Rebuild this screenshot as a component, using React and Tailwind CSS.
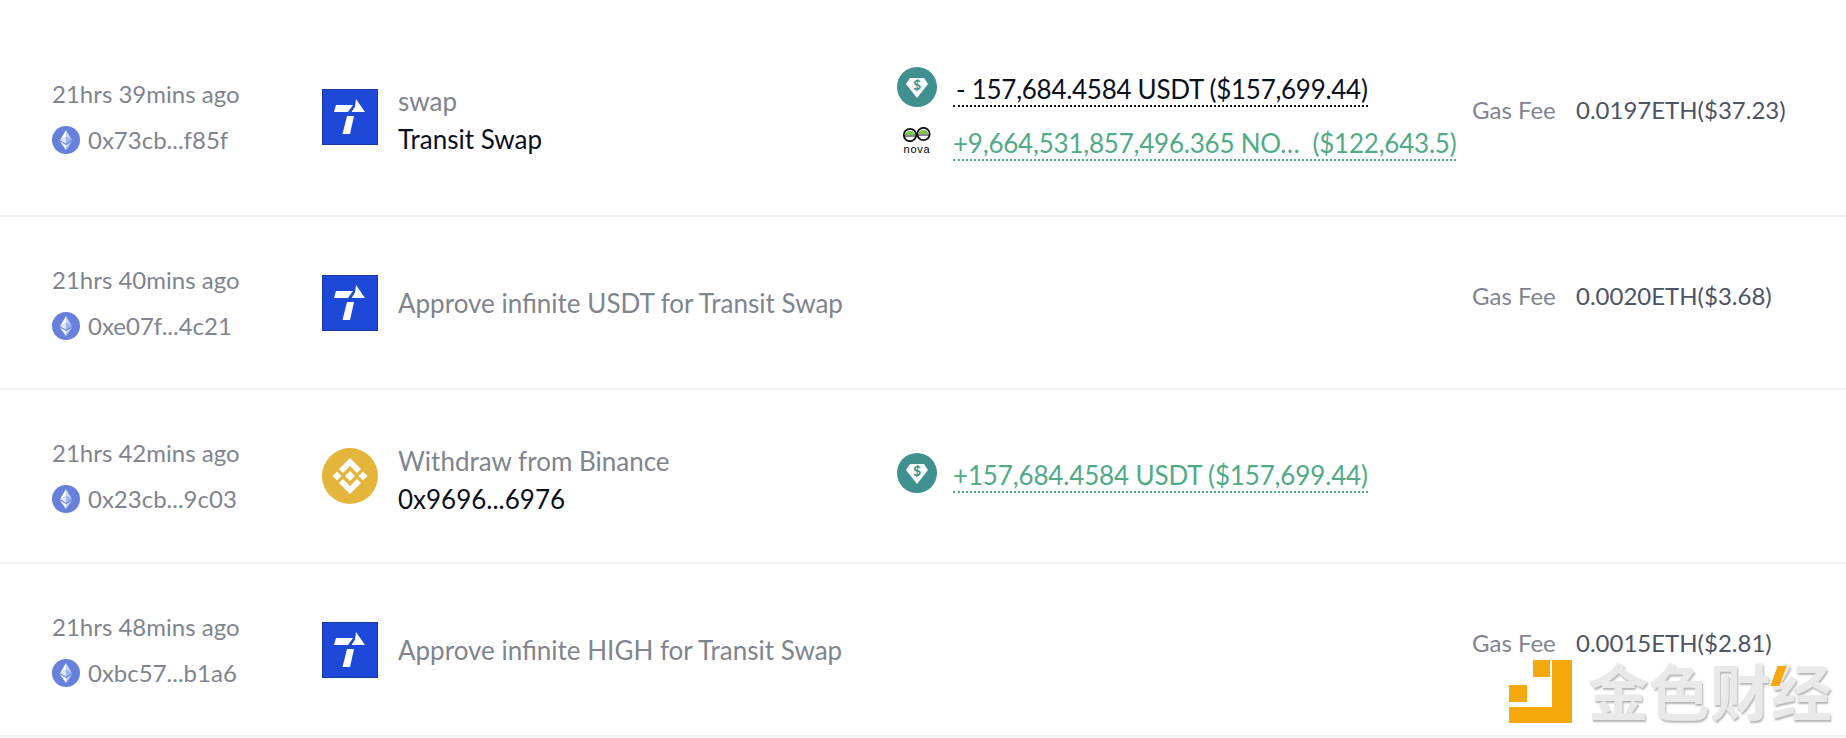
function TransitIcon() {
  return (
    <svg viewBox="0 0 56 56" className="w-14 h-14 shrink-0">
      <rect width="56" height="56" fill="#1d48d8" />
      <rect x="0.5" y="0.5" width="55" height="55" fill="none" stroke="#173a9e" />
      <path d="M14 16H31L26 23H12Z" fill="#fff" />
      <path d="M34 10L43 23H29.5L33 17.5Z" fill="#fff" />
      <path d="M25 27H32L28 45H20.5Z" fill="#fff" />
    </svg>
  );
}

function BinanceIcon() {
  return (
    <svg viewBox="0 0 56 56" className="w-14 h-14 shrink-0">
      <circle cx="28" cy="28" r="28" fill="#e3b53b" />
      <g fill="#fff">
        <path d="M28 10L39 21L35 25L28 18L21 25L17 21Z" />
        <path d="M28 46L39 35L35 31L28 38L21 31L17 35Z" />
        <path d="M15 23.5L19.5 28L15 32.5L10.5 28Z" />
        <path d="M41 23.5L45.5 28L41 32.5L36.5 28Z" />
        <path d="M28 23L33 28L28 33L23 28Z" />
      </g>
    </svg>
  );
}

function UsdtIcon() {
  return (
    <svg viewBox="0 0 40 40" className="w-10 h-10">
      <circle cx="20" cy="20" r="20" fill="#40908f" />
      <path d="M13 11H27L31 17L20 31L9 17Z" fill="#fff" />
      <text x="20" y="23" textAnchor="middle" fontSize="14" fontWeight="700" fill="#40908f" fontFamily="Lato, sans-serif">$</text>
    </svg>
  );
}

function NovaIcon() {
  return (
    <div className="w-10 flex flex-col items-center">
      <svg viewBox="0 0 30 15" className="w-[30px] h-[15px]">
        <circle cx="8" cy="8" r="6.2" fill="#fff" stroke="#111" strokeWidth="1.8" />
        <circle cx="21.5" cy="7" r="6.2" fill="#fff" stroke="#111" strokeWidth="1.8" />
        <path d="M2.8 8A5.4 5.4 0 0 1 13.2 8Z" fill="#7cc24f" />
        <path d="M16.3 7A5.4 5.4 0 0 1 26.7 7Z" fill="#7cc24f" />
        <path d="M2 9H14M15 8H28" stroke="#111" strokeWidth="1.2" />
      </svg>
      <span className="text-[11px] leading-[10px] mt-[2px] text-black font-['Liberation_Sans',sans-serif] tracking-[0.8px]">nova</span>
    </div>
  );
}

function EthIcon() {
  return (
    <svg viewBox="0 0 28 28" className="w-7 h-7 shrink-0">
      <circle cx="14" cy="14" r="14" fill="#6680dc" />
      <path d="M14 4V11L20 14.2Z" fill="#c6d2f8" />
      <path d="M14 4L8 14.2L14 11Z" fill="#fff" />
      <path d="M14 11V17.8L20 14.2Z" fill="#9fb2f2" />
      <path d="M14 11L8 14.2L14 17.8Z" fill="#dfe5fb" />
      <path d="M14 19V24L20 15.6Z" fill="#c6d2f8" />
      <path d="M14 19L8 15.6L14 24Z" fill="#fff" />
    </svg>
  );
}

function TimeCol({ time, hash }) {
  return (
    <div className="w-[270px] shrink-0 flex flex-col gap-[18px] text-[24px] leading-[28px] text-[#80848e]">
      <div>{time}</div>
      <div className="flex items-center gap-[8px]">
        <EthIcon />
        <span>{hash}</span>
      </div>
    </div>
  );
}

function Gas({ value }) {
  return (
    <div className="flex items-center mb-[14px] text-[24px] leading-[28px]">
      <span className="w-[104px] text-[#80848e]">Gas Fee</span>
      <span className="text-[#4d5463]">{value}</span>
    </div>
  );
}

function Token({ icon, text, color }) {
  return (
    <div className="flex items-center gap-4 h-[54px]">
      <div className="w-10 flex justify-center mb-[6px]">{icon}</div>
      <span className={`text-[26px] leading-[32px] border-b-2 border-dotted whitespace-pre ${color}`}>{text}</span>
    </div>
  );
}

function Row({ height, icon, title, sub, tokens, gas, time, hash, top }) {
  return (
    <div className={`flex items-center pl-[52px] border-b-2 border-[#f1f1f3] ${height} ${top}`}>
      <TimeCol time={time} hash={hash} />
      <div className="w-[575px] shrink-0 flex items-center gap-[20px]">
        {icon}
        {sub ? (
          <div className="flex flex-col gap-[6px] pt-[7px] text-[26px] leading-[32px]">
            <div className="text-[#80848e]">{title}</div>
            <div className="text-[#0a0f1e]">{sub}</div>
          </div>
        ) : (
          <div className="text-[26px] leading-[32px] text-[#80848e]">{title}</div>
        )}
      </div>
      <div className="w-[575px] shrink-0 flex flex-col">{tokens}</div>
      {gas && <Gas value={gas} />}
    </div>
  );
}

export default function App() {
  return (
    <div className="relative w-[1846px] h-[738px] overflow-hidden bg-white font-['Lato',sans-serif]">
      <Row
        height="h-[217px]"
        top="pt-[18px]"
        time="21hrs 39mins ago"
        hash="0x73cb...f85f"
        icon={<TransitIcon />}
        title="swap"
        sub="Transit Swap"
        gas="0.0197ETH($37.23)"
        tokens={
          <>
            <Token icon={<UsdtIcon />} text="- 157,684.4584 USDT ($157,699.44)" color="text-[#0a0f1e] border-[#0a0f1e] tracking-[-0.28px] pl-[3px]" />
            <Token icon={<NovaIcon />} text="+9,664,531,857,496.365 NO…  ($122,643.5)" color="text-[#50aa86] border-[#50aa86] tracking-[-0.22px]" />
          </>
        }
      />
      <Row
        height="h-[173px]"
        top=""
        time="21hrs 40mins ago"
        hash="0xe07f...4c21"
        icon={<TransitIcon />}
        title="Approve infinite USDT for Transit Swap"
        gas="0.0020ETH($3.68)"
      />
      <Row
        height="h-[174px]"
        top=""
        time="21hrs 42mins ago"
        hash="0x23cb...9c03"
        icon={<BinanceIcon />}
        title="Withdraw from Binance"
        sub="0x9696...6976"
        tokens={<Token icon={<UsdtIcon />} text="+157,684.4584 USDT ($157,699.44)" color="text-[#50aa86] border-[#50aa86] tracking-[-0.15px]" />}
      />
      <Row
        height="h-[173px]"
        top=""
        time="21hrs 48mins ago"
        hash="0xbc57...b1a6"
        icon={<TransitIcon />}
        title="Approve infinite HIGH for Transit Swap"
        gas="0.0015ETH($2.81)"
      />
      <div className="absolute left-[1509px] top-[660px] flex items-start gap-[16px]">
        <svg viewBox="0 0 63 63" className="w-[63px] h-[63px]">
          <g fill="#f5a90d">
            <rect x="24" y="0" width="17" height="17" />
            <rect x="0" y="25" width="18" height="17" />
            <path d="M43 0H63V63H0V47H43Z" />
          </g>
        </svg>
        <span className="relative text-[61px] leading-[60px] font-bold text-[#e9e9e9] [text-shadow:1px_2px_2px_#b5b5b5] font-['Noto_Sans_CJK_SC',sans-serif]">
          金色财经
          <span className="absolute left-[186px] top-[6px] w-[9px] h-[20px] bg-[#f5a90d] skew-x-[-20deg]" />
        </span>
      </div>
    </div>
  );
}
